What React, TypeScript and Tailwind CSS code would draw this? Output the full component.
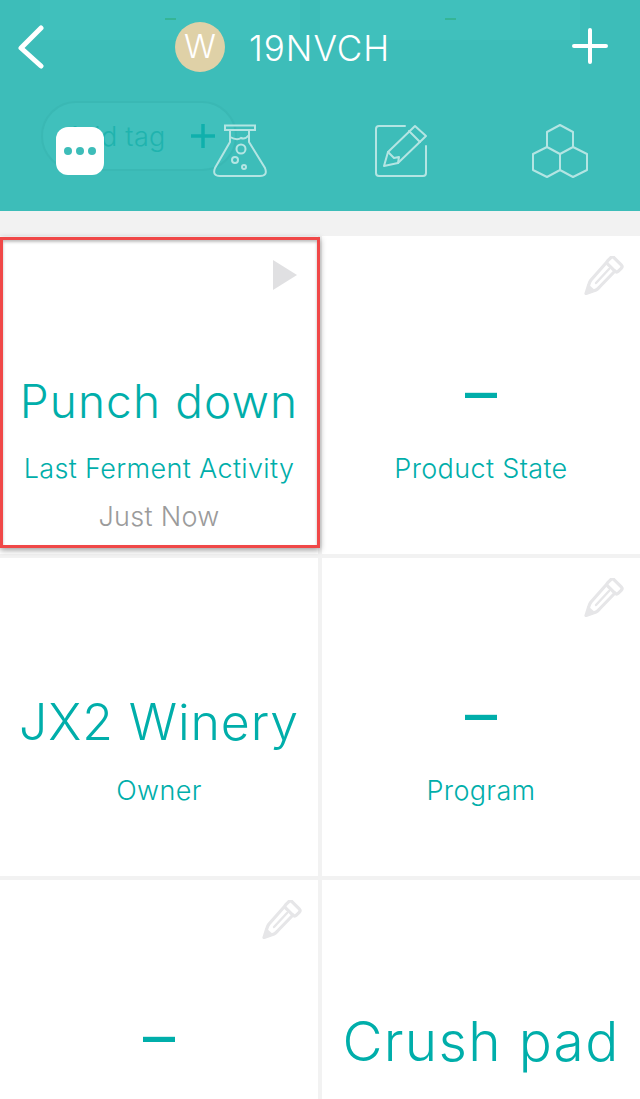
const font = { fontFamily: '"Inter", "Liberation Sans", sans-serif' };

function Pencil() {
  return (
    <svg width="40" height="40" viewBox="0 0 40 40" fill="none" stroke="#e6e6e8" strokeWidth="3.2" strokeLinejoin="round" strokeLinecap="round">
      <rect x="23" y="4" width="15" height="9" rx="2.5" transform="rotate(45 30.5 8.5)" />
      <path d="M22 7 L7 24 Q5.5 26 5 28 L2 37.5 L12 34 Q14 33 15.5 31 L31 15" />
      <path d="M12 27 L25 13" strokeWidth="2.4" />
      <path d="M1 39 L4 28 L12 35 Z" fill="#e6e6e8" stroke="none" />
    </svg>
  );
}

function Cell({ title, titleClass, label, sub, icon, labelGap, titleGap, selected }: { title: string; titleClass: string; label?: string; sub?: string; icon?: "pencil" | "play"; labelGap: string; titleGap: string; selected?: boolean }) {
  return (
    <div className="relative h-[318px] bg-white flex flex-col items-center">
      {selected && <div className="absolute left-0 top-px w-[320px] h-[311px] border-[3px] border-[#f04848] shadow-[0_2px_6px_rgba(0,0,0,0.4),inset_0_2px_3px_rgba(0,0,0,0.25)] z-10" />}
      {icon === "pencil" && <div className="absolute top-[20px] right-[16px]"><Pencil /></div>}
      {icon === "play" && <div className="absolute top-[24px] right-[21px] w-0 h-0 border-y-[15px] border-y-transparent border-l-[24px] border-l-[#e0e0e2]" />}
      <div className={`${titleGap} h-[56px] flex items-center text-[#00aeaa] whitespace-nowrap ${titleClass}`}>{title}</div>
      {label && <div className={`${labelGap} h-[32px] flex items-center text-[27px] tracking-[0.35px] text-[#00aeaa] font-light whitespace-nowrap`}>{label}</div>}
      {sub && <div className="mt-[16px] h-[32px] flex items-center text-[27px] tracking-[0.3px] text-[#9b9b9b] font-light">{sub}</div>}
    </div>
  );
}

const dash = "text-[64px] font-normal";

export default function App() {
  return (
    <div className="relative w-[640px] h-[1099px] overflow-hidden bg-[#f2f2f2]" style={font}>
      <header className="relative h-[211px] bg-[#3dbdb9] text-white">
        <div className="absolute left-[40px] top-0 w-[260px] h-[40px] bg-[#40c0bc]" />
        <div className="absolute left-[320px] top-0 w-[260px] h-[40px] bg-[#40c0bc]" />
        <div className="absolute left-[165px] top-[18px] w-[11px] h-[2px] bg-[#35b596]" />
        <div className="absolute left-[445px] top-[18px] w-[11px] h-[2px] bg-[#35b596]" />
        <div className="absolute left-[41px] top-[101px] w-[196px] h-[70px] rounded-full bg-[#40c0bc] border-2 border-[#3ab8b4] flex items-center">
          <span className="ml-[23px] mt-[3px] text-[27px] tracking-[0.3px] text-[#1fb3ae] font-light">Add tag</span>
        </div>
        <svg className="absolute left-[190px] top-[123px]" width="26" height="26" viewBox="0 0 26 26" stroke="#0fb0ac" strokeWidth="3.5"><path d="M13 1V25M1 13H25" /></svg>

        <div className="relative flex items-center h-[96px]">
          <svg className="absolute left-[16px] top-[25px]" width="28" height="44" viewBox="0 0 28 44" fill="none" stroke="#fff" strokeWidth="5" strokeLinecap="round" strokeLinejoin="round"><path d="M25 3 L5 23 L25 41" /></svg>
          <div className="absolute left-[175px] top-[22px] w-[50px] h-[50px] rounded-full bg-[#dfd1a7] flex items-center justify-center text-[33px] font-light">W</div>
          <div className="absolute left-[249px] top-[27px] text-[35px] leading-[42px] font-light tracking-[1px]">19NVCH</div>
          <svg className="absolute left-[571px] top-[27px]" width="38" height="38" viewBox="0 0 38 38" stroke="#fff" strokeWidth="4" strokeLinecap="round"><path d="M19 3V35M3 19H35" /></svg>
        </div>

        <div className="absolute left-[56px] top-[127px] w-[48px] h-[48px] rounded-[12px] bg-white flex items-center justify-center gap-[4px]">
          <span className="w-[8px] h-[8px] rounded-full bg-[#3dbdb9]" />
          <span className="w-[8px] h-[8px] rounded-full bg-[#3dbdb9]" />
          <span className="w-[8px] h-[8px] rounded-full bg-[#3dbdb9]" />
        </div>
        <svg className="absolute left-[213px] top-[124px]" width="54" height="54" viewBox="0 0 54 54" fill="none" stroke="#b4e5e3" strokeWidth="2">
          <path d="M12 1.5H42V6H12Z" />
          <path d="M17 6V18L2 44Q-1 52 7 52H47Q55 52 52 44L36 18V6" />
          <path d="M17 13Q24 17 28 14Q32 16 36 11" />
          <circle cx="28" cy="25" r="4.5" />
          <circle cx="22" cy="36" r="3" />
          <circle cx="31" cy="43" r="2" />
        </svg>
        <svg className="absolute left-[374px] top-[124px]" width="54" height="54" viewBox="0 0 54 54" fill="none" stroke="#b4e5e3" strokeWidth="2" strokeLinecap="round" strokeLinejoin="round">
          <path d="M31 2H5Q2 2 2 5V49Q2 52 5 52H49Q52 52 52 49V22" />
          <path d="M14 28L41 2L52 12L24 39L10 42Z" />
          <path d="M35 7L46 18M14 28L20 34L25 33L24 39" />
        </svg>
        <svg className="absolute left-[532px] top-[124px]" width="56" height="56" viewBox="0 0 56 56" fill="none" stroke="#b4e5e3" strokeWidth="2" strokeLinejoin="round">
          <path d="M28 1L41 8V23L28 30L15 23V8Z" />
          <path d="M15 23L1 30V46L15 53L28 46V30M41 23L55 30V46L41 53L28 46" />
        </svg>
      </header>

      <main className="mt-[25px] grid grid-cols-[318px_318px] gap-[4px]">
        <Cell title="Punch down" titleClass="text-[46px] font-light tracking-[1.1px]" titleGap="mt-[137px]" labelGap="mt-[24px]" label="Last Ferment Activity" sub="Just Now" icon="play" selected />
        <Cell title="–" titleClass={dash} titleGap="mt-[128px]" labelGap="mt-[33px]" label="Product State" icon="pencil" />
        <Cell title="JX2 Winery" titleClass="text-[50px] font-light tracking-[0.9px]" titleGap="mt-[136px]" labelGap="mt-[25px]" label="Owner" />
        <Cell title="–" titleClass={dash} titleGap="mt-[128px]" labelGap="mt-[33px]" label="Program" icon="pencil" />
        <Cell title="–" titleClass={dash} titleGap="mt-[128px]" labelGap="mt-[33px]" icon="pencil" />
        <Cell title="Crush pad" titleClass="text-[55px] font-light tracking-[1.3px]" titleGap="mt-[133px]" labelGap="mt-[24px]" />
      </main>
    </div>
  );
}
